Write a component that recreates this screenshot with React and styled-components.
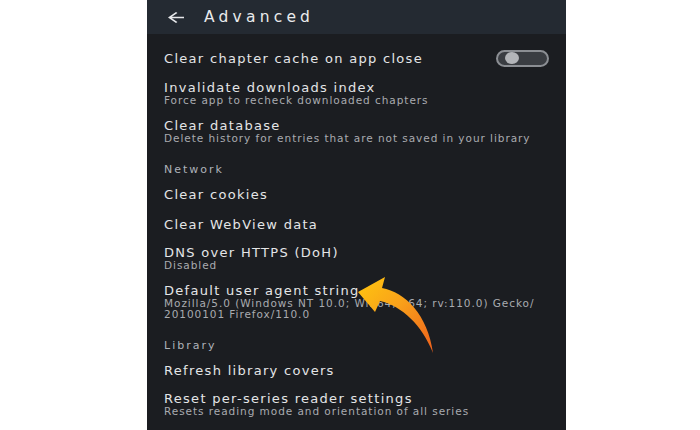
import React from 'react'
import styled, { createGlobalStyle } from 'styled-components'

const GlobalStyle = createGlobalStyle`
  html, body {
    margin: 0;
    padding: 0;
    background: #ffffff;
  }
  body {
    width: 700px;
    height: 430px;
    overflow: hidden;
  }
`

const Page = styled.div`
  position: relative;
  width: 700px;
  height: 430px;
  box-sizing: border-box;
  padding-left: 147px;
  background: #ffffff;
  font-family: 'DejaVu Sans', 'Liberation Sans', sans-serif;
`

const Phone = styled.div`
  width: 419px;
  height: 430px;
  display: flex;
  flex-direction: column;
  background: #1b1d21;
  overflow: hidden;
`

const TopBar = styled.header`
  height: 34px;
  flex: none;
  display: flex;
  align-items: center;
  gap: 20px;
  padding-left: 21px;
  background: #242a32;
`

const BackArrow = styled.svg`
  width: 16px;
  height: 11px;
  fill: #e6e7ea;
`

const ScreenTitle = styled.h1`
  margin: 0;
  font-size: 15.5px;
  font-weight: 400;
  letter-spacing: 4.2px;
  color: #e9eaec;
`

const List = styled.div`
  display: flex;
  flex-direction: column;
  padding: 8px 17px 0 17px;
`

const Row = styled.div`
  display: flex;
  align-items: center;
  justify-content: space-between;
  padding: ${(p) => (p.$hasSub ? '6.5px 0' : '7.5px 0')};
`

const Texts = styled.div`
  display: flex;
  flex-direction: column;
`

const Title = styled.div`
  font-size: 13px;
  line-height: ${(p) => (p.$hasSub ? '14px' : '15px')};
  letter-spacing: 1.3px;
  color: #e4e5e7;
  white-space: nowrap;
`

const Sub = styled.div`
  font-size: 10.5px;
  line-height: 11px;
  letter-spacing: 0.95px;
  color: #a9abb0;
  white-space: nowrap;
`

const Section = styled.div`
  padding: 14px 0 3px;
  font-size: 11px;
  line-height: 12px;
  letter-spacing: 2px;
  color: #aeb2b9;
`

const Switch = styled.div`
  width: 53px;
  height: 17px;
  box-sizing: border-box;
  border: 2px solid #8b8e93;
  border-radius: 9px;
  background: #3a3d42;
  display: flex;
  align-items: center;
  padding-left: 7px;
`

const Thumb = styled.div`
  width: 14px;
  height: 12px;
  border-radius: 50%;
  background: #b3b5b9;
`

const Pointer = styled.svg`
  position: absolute;
  left: 350px;
  top: 270px;
  width: 90px;
  height: 90px;
  pointer-events: none;
`

const Item = ({ title, sub, children }) => {
  const lines = sub ? (Array.isArray(sub) ? sub : [sub]) : []
  const hasSub = lines.length > 0
  return (
    <Row $hasSub={hasSub}>
      <Texts>
        <Title $hasSub={hasSub}>{title}</Title>
        {lines.map((line) => (
          <Sub key={line}>{line}</Sub>
        ))}
      </Texts>
      {children}
    </Row>
  )
}

export default function App() {
  return (
    <Page>
      <GlobalStyle />
      <Phone>
        <TopBar>
          <BackArrow viewBox="4 4 16 16" preserveAspectRatio="none">
            <path d="M20 11H7.83l5.59-5.59L12 4l-8 8 8 8 1.41-1.41L7.83 13H20v-2z" />
          </BackArrow>
          <ScreenTitle>Advanced</ScreenTitle>
        </TopBar>
        <List>
          <Item title="Clear chapter cache on app close">
            <Switch>
              <Thumb />
            </Switch>
          </Item>
          <Item title="Invalidate downloads index" sub="Force app to recheck downloaded chapters" />
          <Item title="Clear database" sub="Delete history for entries that are not saved in your library" />
          <Section>Network</Section>
          <Item title="Clear cookies" />
          <Item title="Clear WebView data" />
          <Item title="DNS over HTTPS (DoH)" sub="Disabled" />
          <Item
            title="Default user agent string"
            sub={['Mozilla/5.0 (Windows NT 10.0; Win64; x64; rv:110.0) Gecko/', '20100101 Firefox/110.0']}
          />
          <Section>Library</Section>
          <Item title="Refresh library covers" />
          <Item title="Reset per-series reader settings" sub="Resets reading mode and orientation of all series" />
        </List>
      </Phone>
      <Pointer viewBox="0 0 90 90">
        <defs>
          <linearGradient id="arrowFill" x1="0" y1="0" x2="1" y2="1">
            <stop offset="0" stopColor="#ffc70f" />
            <stop offset="0.45" stopColor="#f9a11a" />
            <stop offset="1" stopColor="#ee5f1c" />
          </linearGradient>
        </defs>
        <path
          d="M8 22 L35 7 L32 18 C55 22 78 45 83 83 C72 55 52 36 30 31 L25 42 Z"
          fill="url(#arrowFill)"
        />
      </Pointer>
    </Page>
  )
}
